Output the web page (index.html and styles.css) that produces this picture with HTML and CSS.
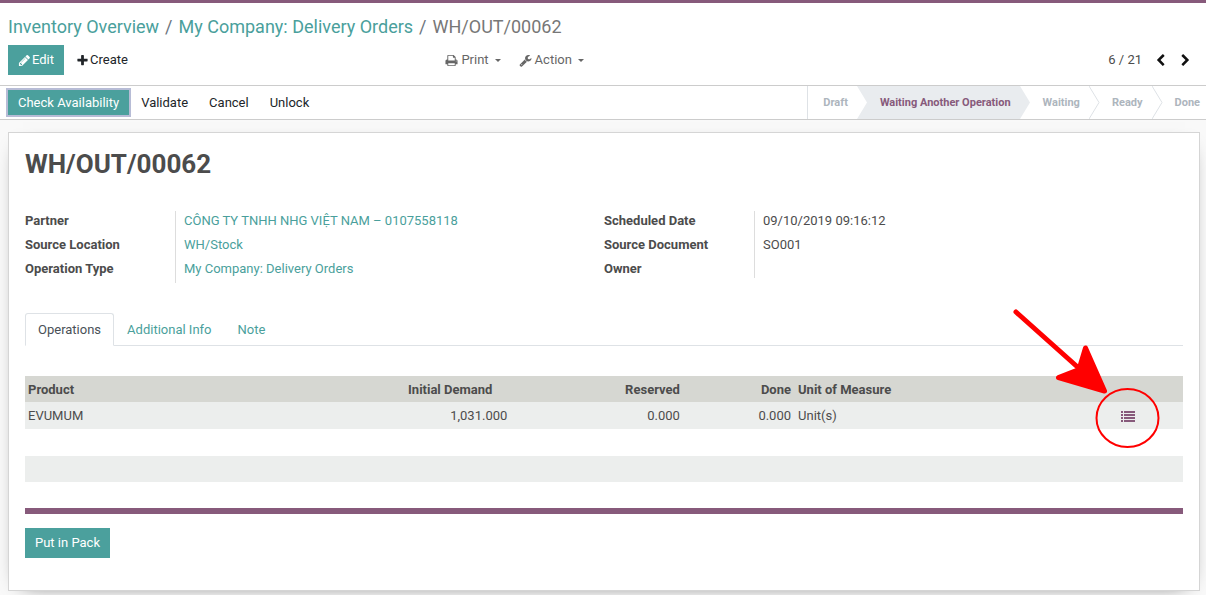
FILE: index.html
```html
<!DOCTYPE html>
<html lang="en">
<head>
  <meta charset="UTF-8">
  <meta name="viewport" content="width=device-width, initial-scale=1.0">
  <title>WH/OUT/00062</title>
  <link rel="stylesheet" href="styles.css">
</head>
<body>
  <header class="control-panel">
    <nav class="breadcrumb" aria-label="Breadcrumb">
      <a href="#">Inventory Overview</a><span class="sep">/</span><a href="#">My Company: Delivery Orders</a><span class="sep">/</span><span class="current">WH/OUT/00062</span>
    </nav>
    <div class="cp-bottom">
      <div class="cp-buttons">
        <button class="btn btn-primary"><svg class="icon" viewBox="0 0 1792 1792"><path d="M491 1536l91-91-235-235-91 91v107h128v128h107zm523-928q0-22-22-22-10 0-17 7l-542 542q-7 7-7 17 0 22 22 22 10 0 17-7l542-542q7-7 7-17zm-54-192l416 416-832 832h-416v-416zm683 96q0 53-37 90l-166 166-416-416 166-165q36-38 90-38 53 0 91 38l235 234q37 39 37 91z"/></svg>Edit</button>
        <button class="btn"><svg class="icon" viewBox="0 0 1792 1792"><path d="M1600 736v192q0 40-28 68t-68 28h-416v416q0 40-28 68t-68 28h-192q-40 0-68-28t-28-68v-416h-416q-40 0-68-28t-28-68v-192q0-40 28-68t68-28h416v-416q0-40 28-68t68-28h192q40 0 68 28t28 68v416h416q40 0 68 28t28 68z"/></svg>Create</button>
      </div>
      <div class="cp-menus">
        <button class="btn btn-menu"><svg class="icon" viewBox="0 0 1792 1792"><path d="M448 1536h896v-256h-896v256zm0-640h896v-384h-160q-40 0-68-28t-28-68v-160h-640v640zm1152 64q0-26-19-45t-45-19-45 19-19 45 19 45 45 19 45-19 19-45zm128 0v416q0 13-9.5 22.5t-22.5 9.5h-224v160q0 40-28 68t-68 28h-960q-40 0-68-28t-28-68v-160h-224q-13 0-22.5-9.5t-9.5-22.5v-416q0-79 56.5-135.5t135.5-56.5h64v-544q0-40 28-68t68-28h672q40 0 88 20t76 48l152 152q28 28 48 76t20 88v256h64q79 0 135.5 56.5t56.5 135.5z"/></svg>Print<span class="caret"></span></button>
        <button class="btn btn-menu"><svg class="icon" viewBox="0 0 1792 1792"><path d="M448 1472q0-26-19-45t-45-19-45 19-19 45 19 45 45 19 45-19 19-45zm644-420l-682 682q-37 37-90 37-52 0-91-37l-106-108q-38-36-38-90 0-53 38-91l681-681q39 98 114.500 173.500t173.500 114.500zm634-435q0 39-23 106-47 134-164.500 217.500t-258.500 83.500q-185 0-316.500-131.500t-131.500-316.500 131.500-316.500 316.500-131.500q58 0 121.500 16.500t107.500 46.500q16 11 16 28t-16 28l-293 169v224l193 107q5-3 79-48.500t135.500-81 70.500-35.500q15 0 23.500 10t8.500 25z"/></svg>Action<span class="caret"></span></button>
      </div>
      <div class="pager">
        <span>6 / 21</span>
        <button class="pager-btn" aria-label="Previous"><svg class="icon" viewBox="0 0 1792 1792"><path d="M1427 301l-531 531 531 531q19 19 19 45t-19 45l-166 166q-19 19-45 19t-45-19l-742-742q-19-19-19-45t19-45l742-742q19-19 45-19t45 19l166 166q19 19 19 45t-19 45z"/></svg></button>
        <button class="pager-btn" aria-label="Next"><svg class="icon" viewBox="0 0 1792 1792"><path d="M1363 877l-742 742q-19 19-45 19t-45-19l-166-166q-19-19-19-45t19-45l531-531-531-531q-19-19-19-45t19-45l166-166q19-19 45-19t45 19l742 742q19 19 19 45t-19 45z"/></svg></button>
      </div>
    </div>
  </header>

  <div class="statusbar">
    <div class="status-buttons">
      <button class="btn btn-primary focused">Check Availability</button>
      <button class="btn">Validate</button>
      <button class="btn">Cancel</button>
      <button class="btn">Unlock</button>
    </div>
    <div class="status-steps">
      <span class="step">Draft</span>
      <svg class="chevron" viewBox="0 0 11 33"><path class="fill" d="M0 0H11V33H0L10 16.500Z"/></svg>
      <span class="step active">Waiting Another Operation</span>
      <svg class="chevron" viewBox="0 0 11 33"><path class="fill" d="M0 0L10 16.500L0 33Z"/></svg>
      <span class="step">Waiting</span>
      <svg class="chevron" viewBox="0 0 11 33"><path class="line" d="M0 0L10 16.500L0 33"/></svg>
      <span class="step">Ready</span>
      <svg class="chevron" viewBox="0 0 11 33"><path class="line" d="M0 0L10 16.500L0 33"/></svg>
      <span class="step last">Done</span>
    </div>
  </div>

  <main class="sheet">
    <h1>WH/OUT/00062</h1>

    <div class="groups">
      <dl class="group">
        <dt>Partner</dt><dd><a href="#">CÔNG TY TNHH NHG VIỆT NAM – 0107558118</a></dd>
        <dt>Source Location</dt><dd><a href="#">WH/Stock</a></dd>
        <dt>Operation Type</dt><dd><a href="#">My Company: Delivery Orders</a></dd>
      </dl>
      <dl class="group">
        <dt>Scheduled Date</dt><dd>09/10/2019 09:16:12</dd>
        <dt>Source Document</dt><dd>SO001</dd>
        <dt>Owner</dt><dd class="empty"></dd>
      </dl>
    </div>

    <nav class="tabs">
      <a class="tab active" href="#">Operations</a>
      <a class="tab" href="#">Additional Info</a>
      <a class="tab" href="#">Note</a>
    </nav>

    <table class="lines">
      <thead>
        <tr>
          <th class="col-product">Product</th>
          <th class="col-demand num">Initial Demand</th>
          <th class="col-reserved num">Reserved</th>
          <th class="col-done num">Done</th>
          <th class="col-uom">Unit of Measure</th>
          <th class="col-details"></th>
        </tr>
      </thead>
      <tbody>
        <tr>
          <td>EVUMUM</td>
          <td class="num">1,031.000</td>
          <td class="num">0.000</td>
          <td class="num">0.000</td>
          <td>Unit(s)</td>
          <td class="details">
            <button class="list-btn" aria-label="Detailed operations">
              <svg viewBox="0 0 14 11"><path d="M0 0h2v2H0zM3 0h11v2H3zM0 3h2v2H0zM3 3h11v2H3zM0 6h2v2H0zM3 6h11v2H3zM0 9h2v2H0zM3 9h11v2H3z"/></svg>
            </button>
            <!-- red arrow and circle over the details button -->
            <svg class="marker" viewBox="0 0 150 145">
              <path class="shaft" d="M6 6L72 65"/>
              <path class="head" d="M75.500 42L94.500 85L48.500 71.500L69 63.500Z"/>
              <ellipse cx="117.500" cy="112" rx="31" ry="29"/>
            </svg>
          </td>
        </tr>
        <tr><td colspan="6"></td></tr>
        <tr class="short"><td colspan="6"></td></tr>
        <tr class="short"><td colspan="6"></td></tr>
      </tbody>
    </table>
    <hr class="divider">

    <button class="btn btn-primary">Put in Pack</button>
  </main>
</body>
</html>
```

FILE: styles.css
```css
* { box-sizing: border-box; }
body {
  margin: 0;
  background: #f9f9f9;
  color: #4c4c4c;
  font-family: Roboto, "Noto Sans", sans-serif;
  font-size: 13px;
  line-height: 18px;
}
a {
  color: #4a9f9c;
  text-decoration: none;
}
.icon {
  width: 13px;
  height: 13px;
  fill: currentColor;
}

/* buttons */
.btn {
  display: inline-flex;
  align-items: center;
  gap: 1px;
  height: 30px;
  padding: 0 10px;
  border: 0;
  background: transparent;
  color: #212529;
  font: inherit;
  white-space: nowrap;
  cursor: pointer;
}
.btn-primary {
  background: #4ba09d;
  color: #fff;
}
.btn-menu {
  gap: 3px;
  padding: 0 9px;
  color: #666;
}
.caret {
  margin-left: 3px;
  border: 3px solid transparent;
  border-top-color: currentColor;
  border-bottom: 0;
}

/* control panel */
.control-panel {
  padding: 12px 8px 10px;
  border-top: 3px solid #875a7b;
  border-bottom: 1px solid #ccc;
  background: #fff;
}
.breadcrumb {
  margin-bottom: 6px;
  color: #777;
  font-size: 18px;
  line-height: 24px;
}
.sep {
  padding: 0 6px;
  color: #6c757d;
}
.cp-bottom {
  display: grid;
  grid-template-columns: 36% 1fr auto;
  align-items: center;
}
.cp-buttons {
  display: flex;
  gap: 2px;
}
.cp-menus { display: flex; }
.pager {
  display: flex;
  align-items: center;
  gap: 12px;
  padding-right: 6px;
}
.pager-btn {
  display: flex;
  padding: 0;
  border: 0;
  background: transparent;
  color: #111;
}

/* status bar */
.statusbar {
  display: flex;
  justify-content: space-between;
  height: 34px;
  border-bottom: 1px solid #ccc;
  background: #fff;
}
.status-buttons {
  display: flex;
  align-items: center;
  gap: 1px;
  padding-left: 8px;
}
.status-buttons .btn { height: 25px; }
.focused {
  margin-right: 1px;
  box-shadow: 0 0 0 2px #b7bcd6;
}
.status-steps {
  display: flex;
  border-left: 1px solid #dee2e6;
  color: #adb5bd;
  font-size: 11px;
  font-weight: bold;
  line-height: 33px;
  white-space: nowrap;
}
.step { padding: 0 9px 0 12px; }
.step:first-child { padding-left: 15px; }
.step.last { padding-right: 6px; }
.step.active {
  background: #e9ecef;
  color: #875a7b;
}
.chevron {
  width: 11px;
  height: 33px;
}
.chevron .fill { fill: #e9ecef; }
.chevron .line {
  fill: none;
  stroke: #dee2e6;
}

/* form sheet */
.sheet {
  margin: 12px 6px 4px 8px;
  padding: 16px 16px 32px;
  border: 1px solid #d5d5d5;
  background: #fff;
  box-shadow: 0 5px 20px -15px #000;
}
h1 {
  margin: 0 0 32px;
  font-size: 26px;
  line-height: 30px;
}
.groups {
  display: grid;
  grid-template-columns: 1fr 1fr;
  align-items: start;
}
.group {
  display: grid;
  grid-template-columns: 150px 1fr;
  align-items: start;
  margin: 0 0 30px;
  line-height: 20px;
}
.group dt {
  height: 18px;
  font-weight: bold;
}
.group dd {
  height: 24px;
  margin: 0;
  padding-left: 8px;
  border-left: 1px solid #ddd;
}
.group .empty { height: 19px; }

.tabs {
  display: flex;
  margin-bottom: 30px;
  border-bottom: 1px solid #dee2e6;
}
.tab {
  margin-bottom: -1px;
  padding: 7px 12px 6px;
  border: 1px solid transparent;
  border-radius: 3px 3px 0 0;
}
.tab.active {
  border-color: #dee2e6;
  border-bottom-color: #fff;
  color: #495057;
}

/* operation lines */
.lines {
  width: 100%;
  border-collapse: collapse;
  table-layout: fixed;
}
.lines th, .lines td {
  height: 27px;
  padding: 0 3px;
  text-align: left;
}
.lines th {
  height: 26px;
  padding-top: 2px;
}
.lines .short td { height: 26px; }
.lines thead tr { background: #d6d7d2; }
.lines tbody tr:nth-child(odd) { background: #eceeed; }
.lines .num {
  padding-right: 4px;
  text-align: right;
}
.lines .col-demand { padding-right: 19px; }
.col-product { width: 30%; }
.col-demand { width: 12%; }
.col-reserved { width: 14.9%; }
.col-done { width: 9.6%; }
.col-uom { width: 24%; }
.lines .details {
  position: relative;
  text-align: center;
}
.list-btn {
  padding: 0;
  border: 0;
  background: transparent;
  vertical-align: middle;
}
.list-btn svg {
  display: block;
  width: 14px;
  height: 11px;
  fill: #875a7b;
}
.marker {
  position: absolute;
  top: -96px;
  right: 23px;
  width: 150px;
  height: 145px;
  fill: none;
  stroke: #f00;
  stroke-width: 2;
  pointer-events: none;
}
.marker .shaft {
  stroke-width: 5;
  stroke-linecap: round;
}
.marker .head {
  fill: #f00;
  stroke-width: 5;
  stroke-linejoin: round;
}
.divider {
  height: 6px;
  margin: 0 0 14px;
  border: 0;
  background: #875a7b;
}
```
